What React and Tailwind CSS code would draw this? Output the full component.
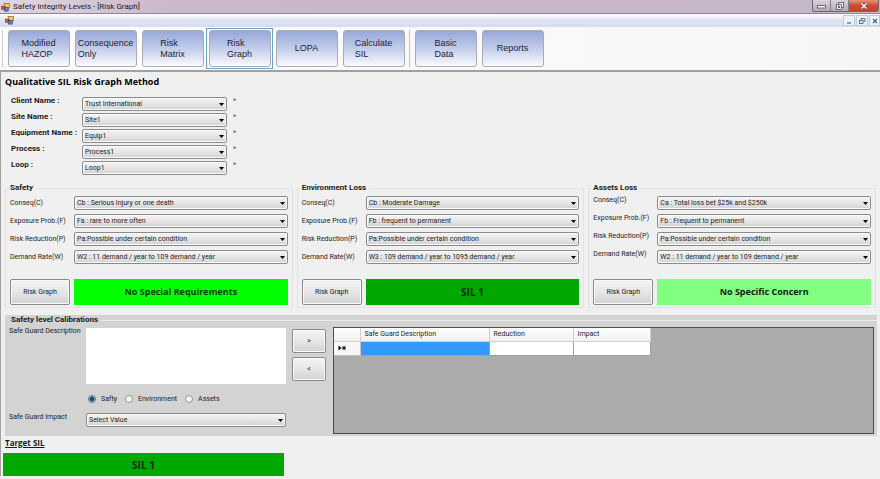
import React, { useId, useState } from 'react';

const toolbarItems = [
  { name: 'Modified HAZOP', lines: ['Modified', 'HAZOP'] },
  { name: 'Consequence Only', lines: ['Consequence', 'Only'] },
  { name: 'Risk Matrix', lines: ['Risk', 'Matrix'] },
  { name: 'Risk Graph', lines: ['Risk', 'Graph'] },
  { name: 'LOPA', lines: ['LOPA'] },
  { name: 'Calculate SIL', lines: ['Calculate', 'SIL'] },
];

const extraItems = [
  { name: 'Basic Data', lines: ['Basic', 'Data'] },
  { name: 'Reports', lines: ['Reports'] },
];

const details = [
  { label: 'Client Name :', value: 'Trust International' },
  { label: 'Site Name :', value: 'Site1' },
  { label: 'Equipment Name :', value: 'Equip1' },
  { label: 'Process :', value: 'Process1' },
  { label: 'Loop :', value: 'Loop1' },
];

const lossGroups = [
  {
    title: 'Safety',
    fields: [
      { label: 'Conseq(C)', value: 'Cb : Serious Injury or one death' },
      { label: 'Exposure Prob.(F)', value: 'Fa : rare to more often' },
      { label: 'Risk Reduction(P)', value: 'Pa:Possible under certain condition' },
      { label: 'Demand Rate(W)', value: 'W2 : 11 demand / year to 109 demand / year' },
    ],
    result: 'No Special Requirements',
    resultClass: 'bg-[#00ff00] text-[9px] text-[#063806]',
    labelClass: 'items-center',
  },
  {
    title: 'Environment Loss',
    fields: [
      { label: 'Conseq(C)', value: 'Cb : Moderate Damage' },
      { label: 'Exposure Prob.(F)', value: 'Fb : frequent to permanent' },
      { label: 'Risk Reduction(P)', value: 'Pa:Possible under certain condition' },
      { label: 'Demand Rate(W)', value: 'W3 : 109 demand / year to 1095 demand / year' },
    ],
    result: 'SIL 1',
    resultClass: 'bg-[#00a800] text-[10px] text-[#0c2c0c]',
    labelClass: 'items-center',
  },
  {
    title: 'Assets Loss',
    fields: [
      { label: 'Conseq(C)', value: 'Ca : Total loss bet $25k and $250k' },
      { label: 'Exposure Prob.(F)', value: 'Fb : Frequent to permanent' },
      { label: 'Risk Reduction(P)', value: 'Pa:Possible under certain condition' },
      { label: 'Demand Rate(W)', value: 'W2 : 11 demand / year to 109 demand / year' },
    ],
    result: 'No Specific Concern',
    resultClass: 'bg-[#80ff80] text-[9px] text-[#0c1c0c]',
    labelClass: 'items-start',
  },
];

const buttonLook =
  'rounded-[2px] border border-[#8a8a8a] bg-linear-to-b from-[#f4f4f4] via-[#e6e6e6] to-[#d2d2d2] shadow-[inset_0_0_0_1px_#fafafa]';

const AppIcon = () => (
  <svg viewBox="0 0 10 10" className="h-[9px] w-[9px] shrink-0" aria-hidden="true">
    <rect x="3.5" y="0.5" width="6" height="5" fill="#f6c84c" stroke="#8b6a2a" strokeWidth="0.8" />
    <rect x="0.5" y="3.5" width="4" height="3.5" fill="#d4523e" stroke="#7c3030" strokeWidth="0.6" />
    <rect x="4" y="5" width="4" height="4" fill="#5b80d0" stroke="#2d4378" strokeWidth="0.7" />
  </svg>
);

const Select = ({ id, value, className }) => (
  <div className={`relative h-[14px] ${className}`}>
    <select
      id={id}
      className={`block h-full w-full appearance-none pl-[2px] text-[7px] leading-[12px] text-[#1c1c1c] ${buttonLook}`}
    >
      <option>{value}</option>
    </select>
    <svg viewBox="0 0 5 3" className="pointer-events-none absolute top-[6px] right-[3px] h-[3px] w-[5px]" aria-hidden="true">
      <path d="M0 0h5L2.5 3z" fill="#000" />
    </svg>
  </div>
);

const ToolButton = ({ item, active, onClick }) => (
  <button
    type="button"
    aria-pressed={active}
    onClick={onClick}
    className={`flex h-[41px] w-[67px] items-center justify-center border ${active ? 'border-[#6ba3cc]' : 'border-transparent'}`}
  >
    <span className="flex h-[37px] w-[62px] items-center justify-center rounded-[3px] border border-[#a9abb8] bg-linear-to-b from-[#97a7d8] via-[#c3cdea] to-[#fbfbfe]">
      <span className="text-left text-[9px] leading-[11px] text-[#1d2034]">
        {item.lines.map((line) => (
          <span key={line} className="block">{line}</span>
        ))}
      </span>
    </span>
  </button>
);

const TitleBar = () => (
  <header>
    <div className="flex h-[13px] items-start justify-between bg-[#c9b7ca] bg-linear-to-r from-[#e0d6e2] via-[#c9b7ca] via-20% to-[#c6b6ca] pl-px">
      <div className="flex items-center gap-[3px] pt-[2px]">
        <AppIcon />
        <h1 className="text-[8px] leading-[10px] text-[#1b1822]">
          Safety Integrity Levels - [Risk Graph]
        </h1>
      </div>
      <div className="mr-px flex h-[12px] overflow-hidden rounded-b-[3px] border border-t-0 border-[#6d6472]">
        <button type="button" aria-label="Minimize" className="flex w-[18px] items-center justify-center border-r border-[#857b88] bg-linear-to-b from-[#ddd3dd] to-[#b5a8b7]">
          <svg viewBox="0 0 9 7" className="h-[7px] w-[9px]"><rect x="0.5" y="3.5" width="8" height="2.5" fill="#fff" stroke="#55505c" strokeWidth="0.8" /></svg>
        </button>
        <button type="button" aria-label="Restore" className="flex w-[18px] items-center justify-center border-r border-[#857b88] bg-linear-to-b from-[#ddd3dd] to-[#b5a8b7]">
          <svg viewBox="0 0 8 8" className="h-[8px] w-[8px]" fill="#fff" stroke="#55505c" strokeWidth="0.8">
            <rect x="2.5" y="0.5" width="5" height="5" />
            <rect x="0.5" y="2.5" width="5" height="5" />
            <rect x="2.3" y="4.2" width="1.5" height="1.5" />
          </svg>
        </button>
        <button type="button" aria-label="Close" className="flex w-[29px] items-center justify-center bg-linear-to-b from-[#e0967f] via-[#cc4a30] to-[#c2452c]">
          <svg viewBox="0 0 8 8" className="h-[8px] w-[8px]">
            <path d="M1.5 1.5l5 5M6.5 1.5l-5 5" stroke="#6a3030" strokeWidth="2.6" />
            <path d="M1.5 1.5l5 5M6.5 1.5l-5 5" stroke="#fff" strokeWidth="1.6" />
          </svg>
        </button>
      </div>
    </div>
    <div className="flex h-[14px] items-center justify-between border-t border-[#8f8791] bg-linear-to-b from-[#ffffff] via-[#dde2f0] to-[#d6ddf0] pl-[5px]">
      <AppIcon />
      <div className="flex gap-px">
        <button type="button" aria-label="Minimize child window" className="flex h-[11px] w-[12px] items-center justify-center border border-[#bccddd] bg-[#eaf3fa]">
          <svg viewBox="0 0 8 8" className="h-[8px] w-[8px]"><path d="M2 6h4" stroke="#4b6680" strokeWidth="1.2" /></svg>
        </button>
        <button type="button" aria-label="Restore child window" className="flex h-[11px] w-[12px] items-center justify-center border border-[#bccddd] bg-[#eaf3fa]">
          <svg viewBox="0 0 8 8" className="h-[8px] w-[8px]" fill="none" stroke="#4b6680" strokeWidth="0.9">
            <path d="M3 3V1.5h4v3H5.5" />
            <rect x="1.5" y="3.5" width="3.5" height="3" />
          </svg>
        </button>
        <button type="button" aria-label="Close child window" className="flex h-[11px] w-[11px] items-center justify-center border border-[#bccddd] bg-[#eaf3fa]">
          <svg viewBox="0 0 8 8" className="h-[8px] w-[8px]"><path d="M2 2l4 4M6 2l-4 4" stroke="#4b6680" strokeWidth="1.3" /></svg>
        </button>
      </div>
    </div>
  </header>
);

const Toolbar = () => {
  const [active, setActive] = useState('Risk Graph');

  return (
    <nav className="flex h-[45px] items-center border-b-2 border-[#a0a0a0] bg-linear-to-r from-[#fdfdfd] to-[#f6f6f6] pl-[2px] font-['Liberation_Sans',sans-serif]">
      <span className="mr-[2px] h-[36px] border-l border-dotted border-[#a8a8a8]" />
      {toolbarItems.map((item) => (
        <ToolButton key={item.name} item={item} active={active === item.name} onClick={() => setActive(item.name)} />
      ))}
      <span className="mx-[2px] h-[37px] border-l border-[#c4c4c4]" />
      {extraItems.map((item) => (
        <ToolButton key={item.name} item={item} active={active === item.name} onClick={() => setActive(item.name)} />
      ))}
    </nav>
  );
};

const DetailRow = ({ label, value }) => {
  const id = useId();

  return (
    <div className="flex h-[16px] items-start">
      <label htmlFor={id} className="w-[71px] whitespace-nowrap text-[8px] leading-[10px] font-bold">
        {label}
      </label>
      <Select id={id} value={value} className="mt-px w-[145px]" />
      <span className="ml-[6px] text-[8px] leading-[10px] text-[#e02020]">*</span>
    </div>
  );
};

const LossField = ({ label, value, labelClass }) => {
  const id = useId();

  return (
    <div className={`flex h-[14px] ${labelClass}`}>
      <label htmlFor={id} className="w-[64px] shrink-0 whitespace-nowrap leading-[8px]">{label}</label>
      <Select id={id} value={value} className="flex-1" />
    </div>
  );
};

const LossGroup = ({ group }) => (
  <fieldset className="min-w-0 border border-[#e0e4e6] px-[4px] pb-[2px]">
    <legend className="pr-[3px] text-[8px] leading-[10px] font-bold">{group.title}</legend>
    <div className="flex flex-col gap-[4px] pt-[3px]">
      {group.fields.map((field) => (
        <LossField key={field.label} {...field} labelClass={group.labelClass} />
      ))}
    </div>
    <div className="mt-[15px] flex h-[26px] gap-[4px]">
      <button type="button" className={`w-[60px] shrink-0 ${buttonLook}`}>Risk Graph</button>
      <output className={`flex flex-1 items-center justify-center font-['Open_Sans',sans-serif] font-bold ${group.resultClass}`}>
        {group.result}
      </output>
    </div>
  </fieldset>
);

const Calibrations = () => {
  const [kind, setKind] = useState('Safty');

  return (
    <section className="mr-[3px] ml-[4px] mt-[7px] bg-[#d3d3d3] pb-[2px]">
      <div className="flex h-[10px] items-center gap-[3px] pl-[6px]">
        <h3 className="text-[8px] leading-[10px] font-bold">Safety level Calibrations</h3>
        <span className="flex-1 border-t border-[#ececec]" />
      </div>
      <div className="flex pt-[2px] pr-[3px] pl-[4px]">
        <div className="mr-[6px] grid w-[277px] shrink-0 grid-cols-[77px_1fr] content-start">
          <label htmlFor="description" className="whitespace-nowrap leading-[8px]">Safe Guard Description</label>
          <textarea id="description" className="mt-px h-[56px] resize-none bg-white p-[2px]" />
          <div className="col-start-2 flex h-[29px] items-center gap-[8px] pl-[2px]">
            {['Safty', 'Environment', 'Assets'].map((name) => (
              <label key={name} className="flex items-center gap-[5px]">
                <input
                  type="radio"
                  name="kind"
                  checked={kind === name}
                  onChange={() => setKind(name)}
                  className="h-[8px] w-[8px] appearance-none rounded-full border border-[#949494] bg-[#f4f4f4] checked:border-[#5a7486] checked:bg-[radial-gradient(circle,#1c4a68_0_2px,#cfe4ef_3px)]"
                />
                {name}
              </label>
            ))}
          </div>
          <label htmlFor="impact" className="leading-[8px]">Safe Guard Impact</label>
          <Select id="impact" value="Select Value" className="w-full" />
        </div>
        <div className="mt-[2px] mr-[7px] flex w-[34px] shrink-0 flex-col gap-[4px]">
          <button type="button" aria-label="Add safe guard" className={`h-[24px] ${buttonLook}`}>&gt;</button>
          <button type="button" aria-label="Remove safe guard" className={`h-[24px] ${buttonLook}`}>&lt;</button>
        </div>
        <div className="h-[107px] flex-1 border border-[#4c4c4c] bg-[#ababab]">
          <table className="table-fixed border-collapse text-left">
            <colgroup>
              <col className="w-[26px]" />
              <col className="w-[129px]" />
              <col className="w-[84px]" />
              <col className="w-[77px]" />
            </colgroup>
            <thead>
              <tr className="h-[13px] bg-linear-to-b from-white to-[#f0f0f0]">
                <th className="border-r border-b border-[#d0d0d0] p-0" />
                <th className="border-r border-b border-[#d0d0d0] py-0 pr-0 pl-[4px] font-normal">Safe Guard Description</th>
                <th className="border-r border-b border-[#d0d0d0] py-0 pr-0 pl-[4px] font-normal">Reduction</th>
                <th className="border-r border-b border-[#d0d0d0] py-0 pr-0 pl-[4px] font-normal">Impact</th>
              </tr>
            </thead>
            <tbody>
              <tr className="h-[14px] bg-white">
                <td className="border-r border-b border-[#c4c4c4] bg-[#f6f6f6] py-0 pr-0 pl-[4px]">
                  <svg viewBox="0 0 8 6" className="h-[6px] w-[8px]" aria-hidden="true">
                    <path d="M0.5 0.5v5L3.5 3z" fill="#000" />
                    <path d="M6 0.8v4.4M3.8 3h4.2M4.5 1.5l3 3M7.5 1.5l-3 3" stroke="#000" strokeWidth="0.8" />
                  </svg>
                </td>
                <td className="border-r border-b border-[#a0a0a0] bg-[#3399ff] p-0" />
                <td className="border-r border-b border-[#a0a0a0] p-0" />
                <td className="border-r border-b border-[#a0a0a0] p-0" />
              </tr>
            </tbody>
          </table>
        </div>
      </div>
    </section>
  );
};

const App = () => (
  <div className="min-h-screen bg-[#f0f0f0] font-['Roboto',sans-serif] text-[7px] leading-[10px] text-[#1c1c1c]">
    <TitleBar />
    <Toolbar />
    <main className="border-l border-[#a0a0a0]">
      <h2 className="pt-[3px] pl-[4px] font-['Open_Sans',sans-serif] text-[9px] leading-[13px] font-bold text-black">
        Qualitative SIL Risk Graph Method
      </h2>
      <div className="mt-[8px] pl-[10px]">
        {details.map((row) => (
          <DetailRow key={row.label} {...row} />
        ))}
      </div>
      <div className="mt-[7px] grid grid-cols-3 gap-[4px] pr-[4px] pl-[4px]">
        {lossGroups.map((group) => (
          <LossGroup key={group.title} group={group} />
        ))}
      </div>
      <Calibrations />
      <h3 className="mt-[2px] pl-[4px] font-['Open_Sans',sans-serif] text-[8px] leading-[10px] font-bold underline">Target SIL</h3>
      <output className="mt-[5px] ml-[2px] flex h-[23px] w-[281px] items-center justify-center bg-[#00a800] font-['Open_Sans',sans-serif] text-[10px] font-bold text-[#0c2c0c]">
        SIL 1
      </output>
    </main>
  </div>
);

export default App;
